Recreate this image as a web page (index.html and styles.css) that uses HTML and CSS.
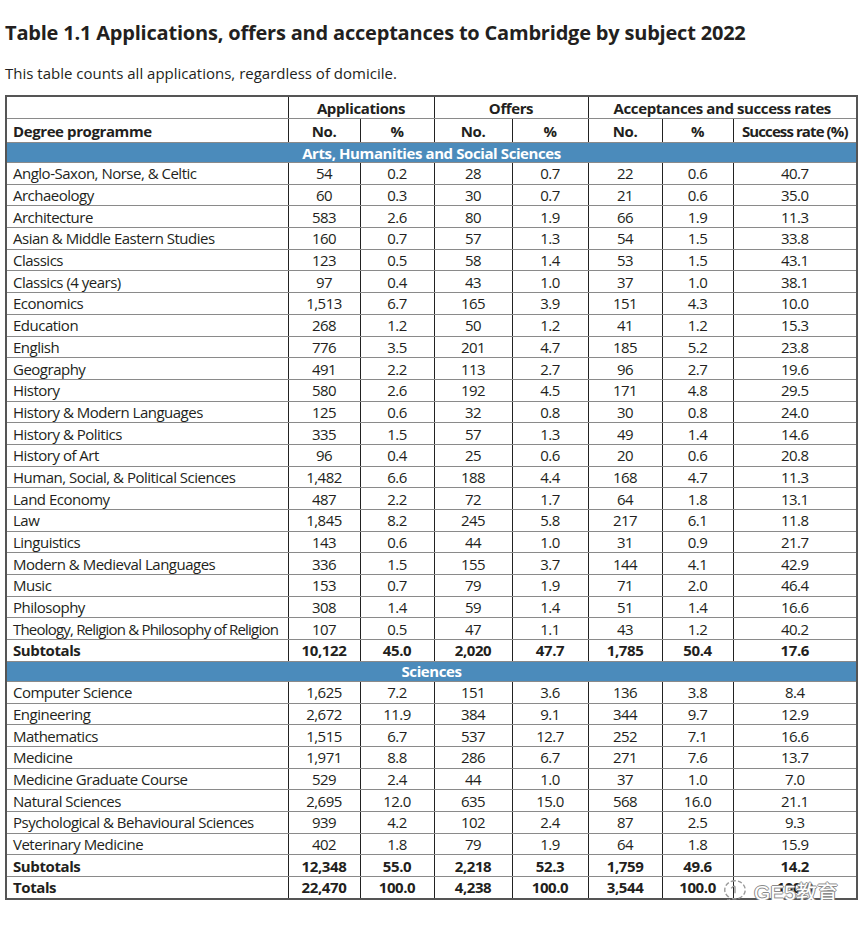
FILE: index.html
```html
<!DOCTYPE html>
<html lang="en">
<head>
<meta charset="utf-8">
<title>Table 1.1</title>
<link rel="stylesheet" href="styles.css">
</head>
<body>
<div class="page">
  <h1 class="title">Table 1.1 Applications, offers and acceptances to Cambridge by subject 2022</h1>
  <p class="sub">This table counts all applications, regardless of domicile.</p>
  <div class="wrap">
  <table class="data">
    <colgroup>
      <col class="c1"><col class="c2"><col class="c3"><col class="c4"><col class="c5"><col class="c6"><col class="c7"><col class="c8">
    </colgroup>
    <thead>
      <tr class="h1row"><th></th><th colspan="2">Applications</th><th colspan="2">Offers</th><th colspan="3">Acceptances and success rates</th></tr>
      <tr class="h2row"><th class="left">Degree programme</th><th>No.</th><th>%</th><th>No.</th><th>%</th><th>No.</th><th>%</th><th class="sr">Success rate (%)</th></tr>
    </thead>
    <tbody>
      <tr class="sec"><td colspan="8">Arts, Humanities and Social Sciences</td></tr>
      <tr><td>Anglo-Saxon, Norse, &amp; Celtic</td><td>54</td><td>0.2</td><td>28</td><td>0.7</td><td>22</td><td>0.6</td><td>40.7</td></tr>
      <tr><td>Archaeology</td><td>60</td><td>0.3</td><td>30</td><td>0.7</td><td>21</td><td>0.6</td><td>35.0</td></tr>
      <tr><td>Architecture</td><td>583</td><td>2.6</td><td>80</td><td>1.9</td><td>66</td><td>1.9</td><td>11.3</td></tr>
      <tr><td>Asian &amp; Middle Eastern Studies</td><td>160</td><td>0.7</td><td>57</td><td>1.3</td><td>54</td><td>1.5</td><td>33.8</td></tr>
      <tr><td>Classics</td><td>123</td><td>0.5</td><td>58</td><td>1.4</td><td>53</td><td>1.5</td><td>43.1</td></tr>
      <tr><td>Classics (4 years)</td><td>97</td><td>0.4</td><td>43</td><td>1.0</td><td>37</td><td>1.0</td><td>38.1</td></tr>
      <tr><td>Economics</td><td>1,513</td><td>6.7</td><td>165</td><td>3.9</td><td>151</td><td>4.3</td><td>10.0</td></tr>
      <tr><td>Education</td><td>268</td><td>1.2</td><td>50</td><td>1.2</td><td>41</td><td>1.2</td><td>15.3</td></tr>
      <tr><td>English</td><td>776</td><td>3.5</td><td>201</td><td>4.7</td><td>185</td><td>5.2</td><td>23.8</td></tr>
      <tr><td>Geography</td><td>491</td><td>2.2</td><td>113</td><td>2.7</td><td>96</td><td>2.7</td><td>19.6</td></tr>
      <tr><td>History</td><td>580</td><td>2.6</td><td>192</td><td>4.5</td><td>171</td><td>4.8</td><td>29.5</td></tr>
      <tr><td>History &amp; Modern Languages</td><td>125</td><td>0.6</td><td>32</td><td>0.8</td><td>30</td><td>0.8</td><td>24.0</td></tr>
      <tr><td>History &amp; Politics</td><td>335</td><td>1.5</td><td>57</td><td>1.3</td><td>49</td><td>1.4</td><td>14.6</td></tr>
      <tr><td>History of Art</td><td>96</td><td>0.4</td><td>25</td><td>0.6</td><td>20</td><td>0.6</td><td>20.8</td></tr>
      <tr><td>Human, Social, &amp; Political Sciences</td><td>1,482</td><td>6.6</td><td>188</td><td>4.4</td><td>168</td><td>4.7</td><td>11.3</td></tr>
      <tr><td>Land Economy</td><td>487</td><td>2.2</td><td>72</td><td>1.7</td><td>64</td><td>1.8</td><td>13.1</td></tr>
      <tr><td>Law</td><td>1,845</td><td>8.2</td><td>245</td><td>5.8</td><td>217</td><td>6.1</td><td>11.8</td></tr>
      <tr><td>Linguistics</td><td>143</td><td>0.6</td><td>44</td><td>1.0</td><td>31</td><td>0.9</td><td>21.7</td></tr>
      <tr><td>Modern &amp; Medieval Languages</td><td>336</td><td>1.5</td><td>155</td><td>3.7</td><td>144</td><td>4.1</td><td>42.9</td></tr>
      <tr><td>Music</td><td>153</td><td>0.7</td><td>79</td><td>1.9</td><td>71</td><td>2.0</td><td>46.4</td></tr>
      <tr><td>Philosophy</td><td>308</td><td>1.4</td><td>59</td><td>1.4</td><td>51</td><td>1.4</td><td>16.6</td></tr>
      <tr><td class="tight">Theology, Religion &amp; Philosophy of Religion</td><td>107</td><td>0.5</td><td>47</td><td>1.1</td><td>43</td><td>1.2</td><td>40.2</td></tr>
      <tr class="tot"><td>Subtotals</td><td>10,122</td><td>45.0</td><td>2,020</td><td>47.7</td><td>1,785</td><td>50.4</td><td>17.6</td></tr>
      <tr class="sec"><td colspan="8">Sciences</td></tr>
      <tr><td>Computer Science</td><td>1,625</td><td>7.2</td><td>151</td><td>3.6</td><td>136</td><td>3.8</td><td>8.4</td></tr>
      <tr><td>Engineering</td><td>2,672</td><td>11.9</td><td>384</td><td>9.1</td><td>344</td><td>9.7</td><td>12.9</td></tr>
      <tr><td>Mathematics</td><td>1,515</td><td>6.7</td><td>537</td><td>12.7</td><td>252</td><td>7.1</td><td>16.6</td></tr>
      <tr><td>Medicine</td><td>1,971</td><td>8.8</td><td>286</td><td>6.7</td><td>271</td><td>7.6</td><td>13.7</td></tr>
      <tr><td>Medicine Graduate Course</td><td>529</td><td>2.4</td><td>44</td><td>1.0</td><td>37</td><td>1.0</td><td>7.0</td></tr>
      <tr><td>Natural Sciences</td><td>2,695</td><td>12.0</td><td>635</td><td>15.0</td><td>568</td><td>16.0</td><td>21.1</td></tr>
      <tr><td>Psychological &amp; Behavioural Sciences</td><td>939</td><td>4.2</td><td>102</td><td>2.4</td><td>87</td><td>2.5</td><td>9.3</td></tr>
      <tr><td>Veterinary Medicine</td><td>402</td><td>1.8</td><td>79</td><td>1.9</td><td>64</td><td>1.8</td><td>15.9</td></tr>
      <tr class="tot"><td>Subtotals</td><td>12,348</td><td>55.0</td><td>2,218</td><td>52.3</td><td>1,759</td><td>49.6</td><td>14.2</td></tr>
      <tr class="tot"><td>Totals</td><td>22,470</td><td>100.0</td><td>4,238</td><td>100.0</td><td>3,544</td><td>100.0</td><td>100.0</td></tr>
    </tbody>
  </table>
  <div class="watermark">
    <svg class="wm-icon" width="28" height="28" viewBox="0 0 26 26" aria-hidden="true">
      <path d="M13 3.5c-5.5 0-9.5 3.8-9.5 8.5 0 2.6 1.3 4.9 3.4 6.4l-0.8 3.6 3.8-2.1c1 0.3 2 0.4 3.1 0.4 5.5 0 9.5-3.8 9.5-8.3S18.5 3.5 13 3.5z" fill="none" stroke="#9a9a9a" stroke-width="1.3" stroke-dasharray="4 2"/>
      <path d="M9.5 10.5c1-1.4 2.2-2 3.5-2M13 8.5v6.5" fill="none" stroke="#9a9a9a" stroke-width="1.3"/>
    </svg>
    <span class="wm-text">GE5教育</span>
  </div>
  </div>
</div>
</body>
</html>
```

FILE: styles.css
```css
html, body {
  margin: 0;
  padding: 0;
  background: #ffffff;
}
.page {
  padding: 17px 4px 0 5px;
  font-family: "Open Sans", "Noto Sans", sans-serif;
  color: #231f20;
}
.title {
  margin: 0;
  font-size: 20px;
  line-height: 32px;
  font-weight: 700;
  letter-spacing: -0.2px;
  color: #231f20;
}
.sub {
  margin: 13px 0 0 0;
  font-size: 15px;
  line-height: 22px;
  letter-spacing: 0;
}
.wrap {
  position: relative;
  margin-top: 11px;
  width: 851px;
}
.data {
  border-collapse: collapse;
  table-layout: fixed;
  width: 851px;
  border: 2px solid #555;
  font-size: 15px;
  letter-spacing: -0.5px;
  color: #231f20;
}
.c1 { width: 282px; }
.c2 { width: 72px; }
.c3 { width: 74px; }
.c4 { width: 78px; }
.c5 { width: 76px; }
.c6 { width: 74px; }
.c7 { width: 71px; }
.c8 { width: 124px; }
.data th, .data td {
  border-left: 1px solid #222;
  border-right: 1px solid #222;
  border-top: 1px solid #8a8a8a;
  border-bottom: 1px solid #8a8a8a;
  padding: 0;
  text-align: center;
  line-height: 18px;
  white-space: nowrap;
}
.data th {
  font-weight: 700;
  font-size: 15px;
  letter-spacing: -0.4px;
}
.h1row th { height: 21px; }
.h2row th { height: 23px; }
.h2row th.left { text-align: left; padding-left: 6px; }
.h2row th.sr { letter-spacing: -0.9px; }
.data tbody td { height: 20.7px; }
.data tbody td:first-child { text-align: left; padding-left: 6px; }
.data td.tight { letter-spacing: -0.8px; }
.sec td {
  background: #4b8bbb;
  color: #ffffff;
  font-weight: 700;
  letter-spacing: -0.4px;
  height: 19px !important;
  text-align: center !important;
  padding-left: 0 !important;
}
.tot td { font-weight: 700; letter-spacing: -0.4px; }
.watermark {
  position: absolute;
  left: 716px;
  bottom: -6px;
  display: flex;
  align-items: center;
  gap: 5px;
  pointer-events: none;
}
.wm-icon { display: block; }
.wm-text {
  font-family: "Liberation Sans", "Noto Sans CJK SC", sans-serif;
  font-size: 21px;
  color: #ffffff;
  letter-spacing: 0;
  text-shadow: -1px 0 #8a8a8a, 1px 0 #8a8a8a, 0 -1px #8a8a8a, 0 1px #8a8a8a;
}
```
